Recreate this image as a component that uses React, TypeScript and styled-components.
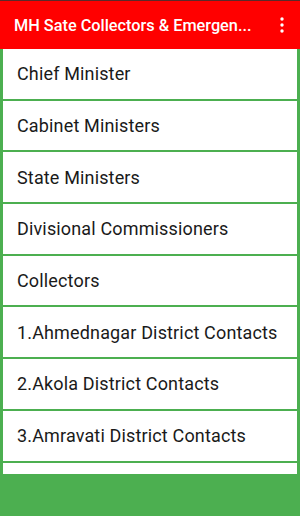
import React from "react";
import styled, { createGlobalStyle } from "styled-components";

const Global = createGlobalStyle`
  html, body { margin: 0; padding: 0; }
  body { font-family: Roboto, "Noto Sans", "Liberation Sans", sans-serif; background: #4caf50; }
  * { box-sizing: border-box; }
`;

const Screen = styled.div`
  width: 300px;
  height: 516px;
  display: flex;
  flex-direction: column;
  background: #4caf50;
  overflow: hidden;
`;

const StatusEdge = styled.div`
  height: 1px;
  background: #5a2a2a;
`;

const Toolbar = styled.div`
  height: 48px;
  background: #ff0000;
  display: flex;
  align-items: center;
  padding: 0 0 0 14px;
`;

const Title = styled.div`
  flex: 1;
  color: #ffffff;
  font-size: 16.3px;
  font-weight: 500;
  white-space: nowrap;
  overflow: hidden;
`;

const MenuButton = styled.div`
  width: 36px;
  height: 48px;
  display: flex;
  align-items: center;
  justify-content: center;
`;

const List = styled.div`
  height: 425px;
  display: flex;
  flex-direction: column;
  gap: 2px;
  padding: 0 3px;
  overflow: hidden;
`;

const Item = styled.div`
  flex: 0 0 49.7px;
  background: #ffffff;
  display: flex;
  align-items: center;
  padding-left: 14px;
  font-size: 18px;
  letter-spacing: 0.15px;
  color: #1a1a1a;
  white-space: nowrap;
`;

const items = [
  "Chief Minister",
  "Cabinet Ministers",
  "State Ministers",
  "Divisional Commissioners",
  "Collectors",
  "1.Ahmednagar District Contacts",
  "2.Akola District Contacts",
  "3.Amravati District Contacts",
];

export default function App() {
  return (
    <Screen>
      <Global />
      <StatusEdge />
      <Toolbar>
        <Title>MH Sate Collectors &amp; Emergen...</Title>
        <MenuButton>
          <svg width="4" height="16" viewBox="0 0 4 16">
            <circle cx="2" cy="2" r="1.7" fill="#fff" />
            <circle cx="2" cy="8" r="1.7" fill="#fff" />
            <circle cx="2" cy="14" r="1.7" fill="#fff" />
          </svg>
        </MenuButton>
      </Toolbar>
      <List>
        {items.map((t) => (
          <Item key={t}>{t}</Item>
        ))}
        <Item aria-hidden="true" />
      </List>
    </Screen>
  );
}
